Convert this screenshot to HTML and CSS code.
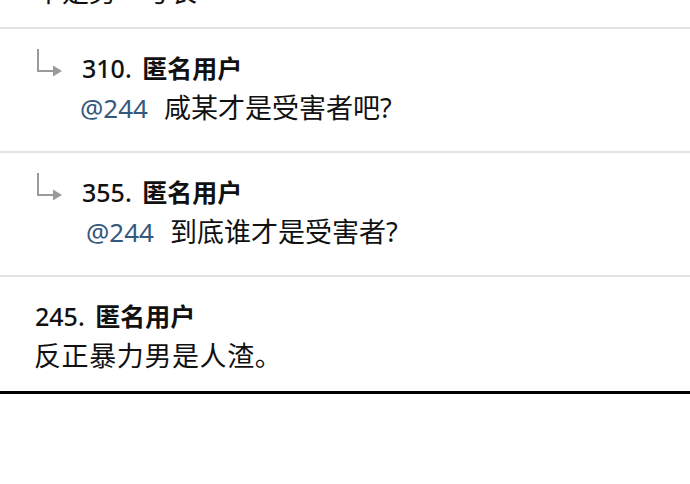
FILE: index.html
```html
<!DOCTYPE html>
<html lang="zh-CN">
<head>
<meta charset="utf-8">
<title>评论</title>
<link rel="stylesheet" href="styles.css">
</head>
<body>
<div class="thread">
  <div class="partial"><p class="text">不是男一号长</p></div>

  <div class="item reply">
    <svg class="reply-icon" width="26" height="28" viewBox="0 0 26 28" aria-hidden="true">
      <path d="M2 0 V22 H18" fill="none" stroke="#9a9a9a" stroke-width="2"/>
      <polygon points="17,16.5 26,22 17,27.5" fill="#9a9a9a"/>
    </svg>
    <div class="body">
      <p class="author"><span class="num">310.</span> 匿名用户</p>
      <p class="text"><span class="mention">@244</span>咸某才是受害者吧?</p>
    </div>
  </div>

  <div class="item reply">
    <svg class="reply-icon" width="26" height="28" viewBox="0 0 26 28" aria-hidden="true">
      <path d="M2 0 V22 H18" fill="none" stroke="#9a9a9a" stroke-width="2"/>
      <polygon points="17,16.5 26,22 17,27.5" fill="#9a9a9a"/>
    </svg>
    <div class="body">
      <p class="author"><span class="num">355.</span> 匿名用户</p>
      <p class="text indent"><span class="mention">@244</span>到底谁才是受害者?</p>
    </div>
  </div>

  <div class="item last">
    <div class="body">
      <p class="author"><span class="num">245.</span> 匿名用户</p>
      <p class="text">反正暴力男是人渣。</p>
    </div>
  </div>
</div>
</body>
</html>
```

FILE: styles.css
```css
html, body {
  margin: 0;
  padding: 0;
  background: #fff;
}

body {
  font-family: "Noto Sans", "Noto Sans CJK SC", sans-serif;
  color: #111;
  font-size: 27px;
  line-height: 40px;
}

p {
  margin: 0;
}

.thread {
  border-bottom: 3px solid #000;
}

/* tail end of the previous comment, scrolled mostly out of view */
.partial {
  height: 27px;
  overflow: hidden;
  display: flex;
  align-items: flex-end;
  padding-left: 35px;
}

.partial .text {
  margin-bottom: 15px;
}

.item {
  display: flex;
  border-top: 2px solid #e4e4e4;
  padding: 19px 0 23px 34px;
}

.item.reply {
  padding-left: 36px;
}

.item.last {
  padding-bottom: 15px;
}

.last .author {
  margin-left: 1px;
}

.last .text {
  letter-spacing: 0.6px;
}

.reply-icon {
  flex: none;
  margin: 1px 20px 0 0;
  align-self: flex-start;
}

.author {
  font-size: 25px;
  font-weight: 700;
}

.author .num {
  font-weight: 500;
  margin-right: 4px;
}

.reply .text {
  margin-left: -2px;
}

.reply .text.indent {
  margin-left: 4px;
}

.mention {
  font-size: 26px;
  color: #36587c;
  margin-right: 16px;
}
```
